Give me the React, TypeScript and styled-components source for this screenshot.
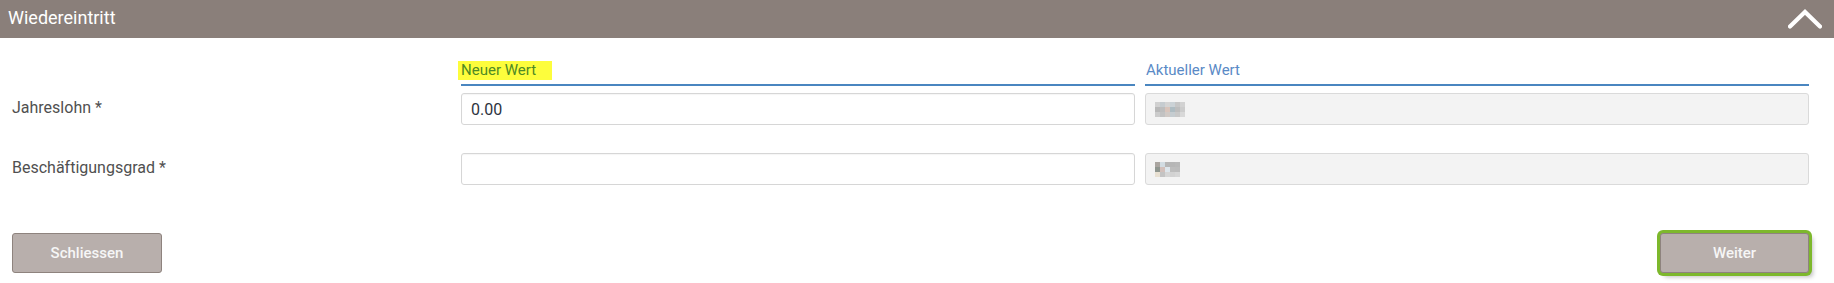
import React from 'react';
import styled, { createGlobalStyle } from 'styled-components';

const GlobalStyle = createGlobalStyle`
  html, body {
    margin: 0;
    padding: 0;
    background: #ffffff;
    font-family: Roboto, "Liberation Sans", Arial, sans-serif;
  }
`;

const Panel = styled.section`
  width: 1834px;
  height: 283px;
  background: #ffffff;
`;

const Header = styled.header`
  height: 38px;
  display: flex;
  align-items: center;
  justify-content: space-between;
  padding: 0 12px 0 8px;
  background: #8a7f7a;
  box-sizing: border-box;
`;

const Title = styled.h2`
  margin: 0;
  font-size: 18px;
  font-weight: 400;
  color: #ffffff;
  line-height: 20px;
  margin-top: -2px;
`;

const CollapseButton = styled.button`
  border: none;
  background: none;
  padding: 0;
  width: 34px;
  height: 20px;
  display: flex;
  align-items: center;
  justify-content: center;
  cursor: pointer;
`;

const Body = styled.div`
  padding: 0 25px 0 12px;
`;

const FormRow = styled.div<{ $top: number }>`
  display: grid;
  grid-template-columns: 439px 674px 664px;
  column-gap: 10px;
  align-items: center;
  margin-top: ${p => p.$top}px;
`;

const ColumnHeading = styled.div<{ $mark?: boolean }>`
  font-size: 15px;
  line-height: 19px;
  padding-bottom: 4px;
  border-bottom: 2px solid #4a86c0;
  color: ${p => (p.$mark ? '#4f8a24' : '#5a8ac6')};

  span {
    display: inline-block;
    background: ${p => (p.$mark ? '#fdfd3c' : 'transparent')};
    padding: 0 ${p => (p.$mark ? '16px' : '0')} 0 ${p => (p.$mark ? '3px' : '1px')};
    margin-left: ${p => (p.$mark ? '-3px' : '0')};
  }
`;

const Label = styled.label`
  font-size: 16px;
  color: #505050;
  line-height: 20px;
  margin-top: -3px;
`;

const Input = styled.input`
  box-sizing: border-box;
  height: 32px;
  width: 100%;
  padding: 0 9px;
  border: 1px solid #d6d6d6;
  border-radius: 3px;
  background: #ffffff;
  box-shadow: inset 0 1px 1px rgba(0, 0, 0, 0.04);
  font-family: Roboto, "Liberation Sans", Arial, sans-serif;
  font-size: 16px;
  color: #2d3440;
  outline: none;
`;

const ReadonlyBox = styled.div`
  box-sizing: border-box;
  height: 32px;
  padding: 0 9px;
  border: 1px solid #dadada;
  border-radius: 3px;
  background: #f3f3f3;
  display: flex;
  align-items: center;
`;

const Mosaic = styled.div<{ $cols: number }>`
  display: grid;
  grid-template-columns: repeat(${p => p.$cols}, 5px);
  grid-auto-rows: 5px;
`;

const Footer = styled.div`
  display: flex;
  justify-content: space-between;
  margin-top: 48px;
`;

const Button = styled.button<{ $focused?: boolean }>`
  box-sizing: border-box;
  width: ${p => (p.$focused ? '149px' : '150px')};
  height: 40px;
  border: 1px solid #8e837e;
  border-radius: 3px;
  background: #b8afac;
  color: #f6f6f6;
  font-family: Roboto, "Liberation Sans", Arial, sans-serif;
  font-size: 15px;
  font-weight: 500;
  cursor: pointer;
  box-shadow: ${p =>
    p.$focused ? '0 0 0 3px #7db82c, 4px 4px 4px rgba(0,0,0,0.25)' : 'none'};
`;

const blur1 = [
  '#d0d0d0', '#c6ccd0', '#d4d4d4', '#cbd2d6', '#c6c6c6', '#d2d2d2',
  '#b8b8b8', '#bdbdbd', '#d8c4bb', '#aebcc2', '#bdbdbd', '#cccccc',
  '#cbcbcb', '#c2c2c2', '#d0c9c5', '#c5ccd0', '#c8c8c8', '#d8d8d8',
];

const blur2 = [
  '#aaa5a0', '#d2dce2', '#b6b6b6', '#b6b6b6', '#b8b8b8',
  '#8f968f', '#d2c0bb', '#dde6ec', '#bdbdbd', '#bcbcbc',
  '#e8e0d2', '#c4c4c4', '#d6d6d6', '#d2d2d2', '#d6d6d6',
];

const ChevronUp = () => (
  <svg width="34" height="20" viewBox="0 0 34 20">
    <path
      d="M2 17.5 L17 3 L32 17.5"
      fill="none"
      stroke="#ffffff"
      strokeWidth="4.2"
      strokeLinecap="round"
      strokeLinejoin="miter"
    />
  </svg>
);

export default function App() {
  return (
    <>
      <GlobalStyle />
      <Panel>
        <Header>
          <Title>Wiedereintritt</Title>
          <CollapseButton aria-label="Einklappen">
            <ChevronUp />
          </CollapseButton>
        </Header>
        <Body>
          <FormRow $top={23}>
            <div />
            <ColumnHeading $mark>
              <span>Neuer Wert</span>
            </ColumnHeading>
            <ColumnHeading>
              <span>Aktueller Wert</span>
            </ColumnHeading>
          </FormRow>

          <FormRow $top={7}>
            <Label>Jahreslohn *</Label>
            <Input defaultValue="0.00" />
            <ReadonlyBox>
              <Mosaic $cols={6}>
                {blur1.map((c, i) => (
                  <div key={i} style={{ background: c }} />
                ))}
              </Mosaic>
            </ReadonlyBox>
          </FormRow>

          <FormRow $top={28}>
            <Label>Beschäftigungsgrad *</Label>
            <Input defaultValue="" />
            <ReadonlyBox>
              <Mosaic $cols={5}>
                {blur2.map((c, i) => (
                  <div key={i} style={{ background: c }} />
                ))}
              </Mosaic>
            </ReadonlyBox>
          </FormRow>

          <Footer>
            <Button>Schliessen</Button>
            <Button $focused>Weiter</Button>
          </Footer>
        </Body>
      </Panel>
    </>
  );
}
